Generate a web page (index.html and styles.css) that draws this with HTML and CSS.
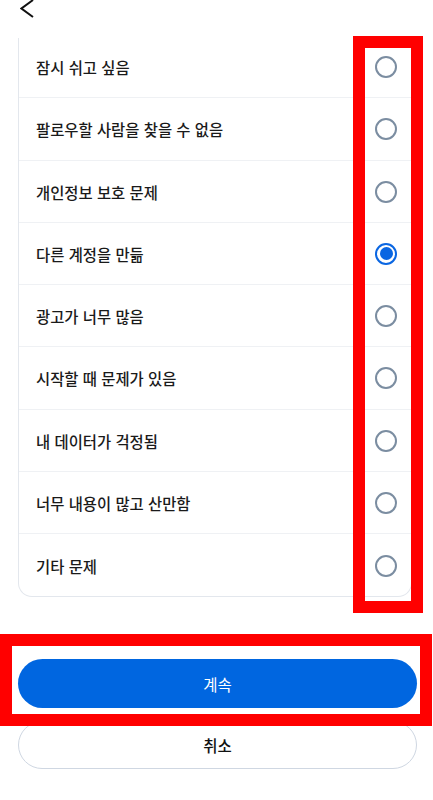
FILE: index.html
```html
<!DOCTYPE html>
<html lang="ko">
<head>
    <meta charset="UTF-8">
    <meta name="viewport" content="width=device-width, initial-scale=1.0">
    <title>계정 비활성화 사유</title>
    <link rel="stylesheet" href="styles.css">
</head>
<body>
    <div class="topbar">
        <svg class="back" width="16" height="22" viewBox="0 0 16 22">
            <path d="M13 0 L1.5 8.5 L13 17" fill="none" stroke="#111" stroke-width="2"/>
        </svg>
    </div>

    <div class="list-clip">
        <div class="card">
            <label class="row"><span>잠시 쉬고 싶음</span><span class="radio"></span></label>
            <label class="row"><span>팔로우할 사람을 찾을 수 없음</span><span class="radio"></span></label>
            <label class="row"><span>개인정보 보호 문제</span><span class="radio"></span></label>
            <label class="row"><span>다른 계정을 만듦</span><span class="radio checked"></span></label>
            <label class="row"><span>광고가 너무 많음</span><span class="radio"></span></label>
            <label class="row"><span>시작할 때 문제가 있음</span><span class="radio"></span></label>
            <label class="row"><span>내 데이터가 걱정됨</span><span class="radio"></span></label>
            <label class="row"><span>너무 내용이 많고 산만함</span><span class="radio"></span></label>
            <label class="row"><span>기타 문제</span><span class="radio"></span></label>
        </div>
    </div>

    <div class="actions">
        <button class="btn primary">계속</button>
        <button class="btn secondary">취소</button>
    </div>

    <div class="mark mark-radios"></div>
    <div class="mark mark-continue"></div>
</body>
</html>
```

FILE: styles.css
```css
body {
    margin: 0;
    padding: 0;
    width: 433px;
    height: 800px;
    position: relative;
    overflow: hidden;
    background: #fff;
    font-family: 'Noto Sans CJK KR', 'Noto Sans', sans-serif;
    color: #1a1a1a;
}

.topbar {
    height: 38px;
    padding-left: 20px;
}

.back {
    display: block;
}

.list-clip {
    overflow: hidden;
    margin: 0 21px 0 18px;
}

.card {
    margin-top: -2px;
    border: 1px solid #e3e7ed;
    border-top: none;
    border-radius: 0 0 14px 14px;
}

.row {
    height: 62.25px;
    box-sizing: border-box;
    display: flex;
    align-items: center;
    justify-content: space-between;
    padding: 1px 14px 0 17px;
    border-bottom: 1px solid #eff1f4;
    font-size: 15.4px;
    font-weight: 500;
}

.row:last-child {
    border-bottom: none;
}

.radio {
    width: 22px;
    height: 22px;
    box-sizing: border-box;
    border: 2px solid #7b8da1;
    border-radius: 50%;
    display: flex;
    align-items: center;
    justify-content: center;
}

.radio.checked {
    border-color: #0a66e2;
}

.radio.checked::after {
    content: "";
    width: 13px;
    height: 13px;
    border-radius: 50%;
    background: #0a66e2;
}

.actions {
    margin: 62px 16px 0 18px;
    display: flex;
    flex-direction: column;
    gap: 13px;
}

.btn {
    border-radius: 25px;
    font-family: inherit;
    font-size: 15.5px;
    font-weight: 400;
    cursor: pointer;
}

.primary {
    height: 49px;
    border: none;
    background: #0066e0;
    color: #fff;
}

.secondary {
    height: 48px;
    border: 1px solid #cfd7e2;
    background: #fff;
    color: #111;
    font-weight: 500;
}

/* red annotation frames */
.mark {
    position: absolute;
    box-sizing: border-box;
    border: 12px solid #ff0000;
    pointer-events: none;
}

.mark-radios {
    left: 353px;
    top: 36px;
    width: 70px;
    height: 577px;
}

.mark-continue {
    left: 0;
    top: 634px;
    width: 432px;
    height: 92px;
}
```
